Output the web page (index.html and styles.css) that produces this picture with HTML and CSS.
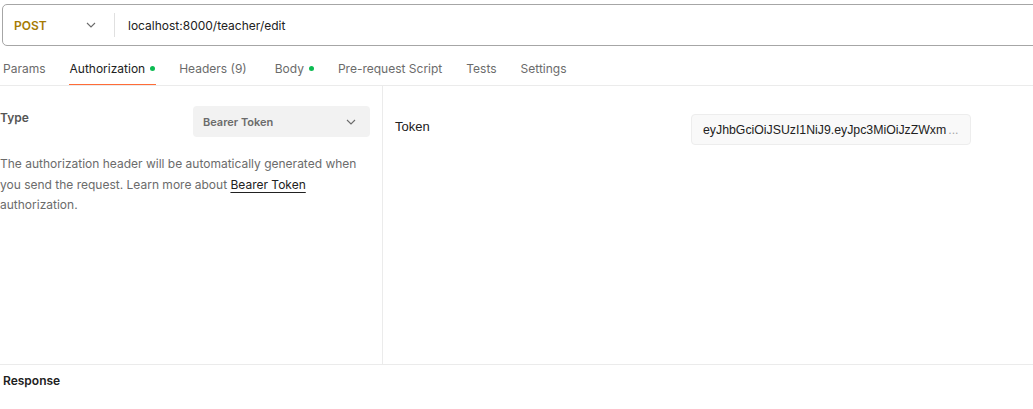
FILE: index.html
```html
<!DOCTYPE html>
<html>
<head>
<meta charset="utf-8">
<link rel="stylesheet" href="styles.css">
</head>
<body>
<div class="page">
  <div class="urlbar">
    <div class="method">
      <span class="method-name">POST</span>
      <svg class="chev" width="10" height="6" viewBox="0 0 10 6"><path d="M1 1l4 4 4-4" fill="none" stroke="#6b6b6b" stroke-width="1.1"/></svg>
    </div>
    <div class="divider"></div>
    <div class="url">localhost:8000/teacher/edit</div>
  </div>

  <div class="tabs">
    <div class="tab">Params</div>
    <div class="tab active">Authorization<span class="dot"></span></div>
    <div class="tab headers">Headers&nbsp;(9)</div>
    <div class="tab">Body<span class="dot"></span></div>
    <div class="tab">Pre-request Script</div>
    <div class="tab">Tests</div>
    <div class="tab">Settings</div>
  </div>

  <div class="auth">
    <div class="left">
      <div class="type-row">
        <div class="type-label">Type</div>
        <div class="select">
          <span>Bearer Token</span>
          <svg width="10" height="6" viewBox="0 0 10 6"><path d="M1 1l4 4 4-4" fill="none" stroke="#6b6b6b" stroke-width="1.1"/></svg>
        </div>
      </div>
      <p class="desc">The authorization header will be automatically generated when you send the request. Learn more about <a class="link">Bearer Token</a> authorization.</p>
    </div>
    <div class="right">
      <div class="token-row">
        <div class="token-label">Token</div>
        <div class="token-input">
          <span class="token-text">eyJhbGciOiJSUzI1NiJ9.eyJpc3MiOiJzZWxm</span><span class="ell">...</span>
        </div>
      </div>
    </div>
  </div>

  <div class="response">Response</div>
</div>
</body>
</html>
```

FILE: styles.css
```css
html, body {
  margin: 0;
  padding: 0;
  background: #ffffff;
  overflow: hidden;
}
body {
  font-family: Inter, "Noto Sans", sans-serif;
  color: #212121;
  width: 1033px;
  height: 409px;
}
.page {
  display: flex;
  flex-direction: column;
  width: 1033px;
  height: 409px;
}
.urlbar {
  margin: 4px -20px 0 2px;
  height: 40px;
  border: 1px solid #a6a6a6;
  border-radius: 5px;
  display: flex;
  align-items: center;
  box-sizing: content-box;
}
.method {
  width: 111px;
  display: flex;
  align-items: center;
  justify-content: space-between;
  padding: 0 18px 0 11px;
  box-sizing: border-box;
}
.method-name {
  font-weight: 600;
  font-size: 12px;
  color: #a67b04;
}
.divider {
  width: 1px;
  height: 24px;
  background: #e0e0e0;
}
.url {
  margin-left: 13px;
  font-size: 12px;
  color: #212121;
}
.tabs {
  display: flex;
  height: 40px;
  box-sizing: border-box;
  border-bottom: 1px solid #ebebeb;
  padding-left: 3px;
  gap: 24px;
  align-items: stretch;
}
.tab {
  font-size: 12px;
  color: #6b6b6b;
  display: flex;
  align-items: center;
  padding-top: 6px;
  box-sizing: border-box;
  border-bottom: 1px solid transparent;
}
.tab.active {
  color: #212121;
  border-bottom: 1px solid #ff6c37;
  padding: 6px 1px 0 1px;
  margin-left: -1px;
  margin-right: -1px;
}
.tab.headers {
  margin-right: 4px;
}
.dot {
  width: 5px;
  height: 5px;
  border-radius: 50%;
  background: #0cbb52;
  margin-left: 5px;
}
.auth {
  display: flex;
  height: 278px;
  border-bottom: 1px solid #ebebeb;
}
.left {
  width: 383px;
  border-right: 1px solid #ebebeb;
  padding-top: 20px;
  box-sizing: border-box;
}
.type-row {
  display: flex;
  justify-content: space-between;
  align-items: flex-start;
  padding-right: 12px;
}
.type-label {
  font-size: 12px;
  font-weight: 600;
  color: #555555;
  margin-top: 4px;
}
.select {
  width: 177px;
  height: 31px;
  background: #f2f2f2;
  border-radius: 4px;
  display: flex;
  align-items: center;
  justify-content: space-between;
  padding: 0 14px 0 10px;
  box-sizing: border-box;
  font-size: 11px;
  font-weight: 600;
  color: #6b6b6b;
}
.desc {
  margin: 17px 0 0 0;
  font-size: 12px;
  line-height: 20.5px;
  color: #6b6b6b;
  padding-right: 16px;
}
.link {
  color: #212121;
  text-decoration: underline;
  text-underline-offset: 3px;
}
.right {
  flex: 1;
  padding-top: 28px;
}
.token-row {
  display: flex;
  align-items: flex-start;
}
.token-label {
  width: 296px;
  padding-left: 12px;
  font-family: "Liberation Sans", Arial, sans-serif;
  font-size: 13px;
  color: #212121;
  margin-top: 5px;
}
.token-input {
  width: 280px;
  height: 31px;
  box-sizing: border-box;
  background: #f9f9f9;
  border: 1px solid #ededed;
  border-radius: 4px;
  display: flex;
  align-items: center;
  padding: 0 11px;
  font-family: "Liberation Sans", Arial, sans-serif;
  font-size: 12.3px;
  color: #212121;
  overflow: hidden;
  white-space: nowrap;
}
.token-text {
  white-space: nowrap;
  flex: none;
}
.ell {
  color: #a6a6a6;
  margin-left: 2px;
}
.response {
  padding: 8px 3px;
  font-size: 12px;
  font-weight: 600;
  color: #212121;
}
```
